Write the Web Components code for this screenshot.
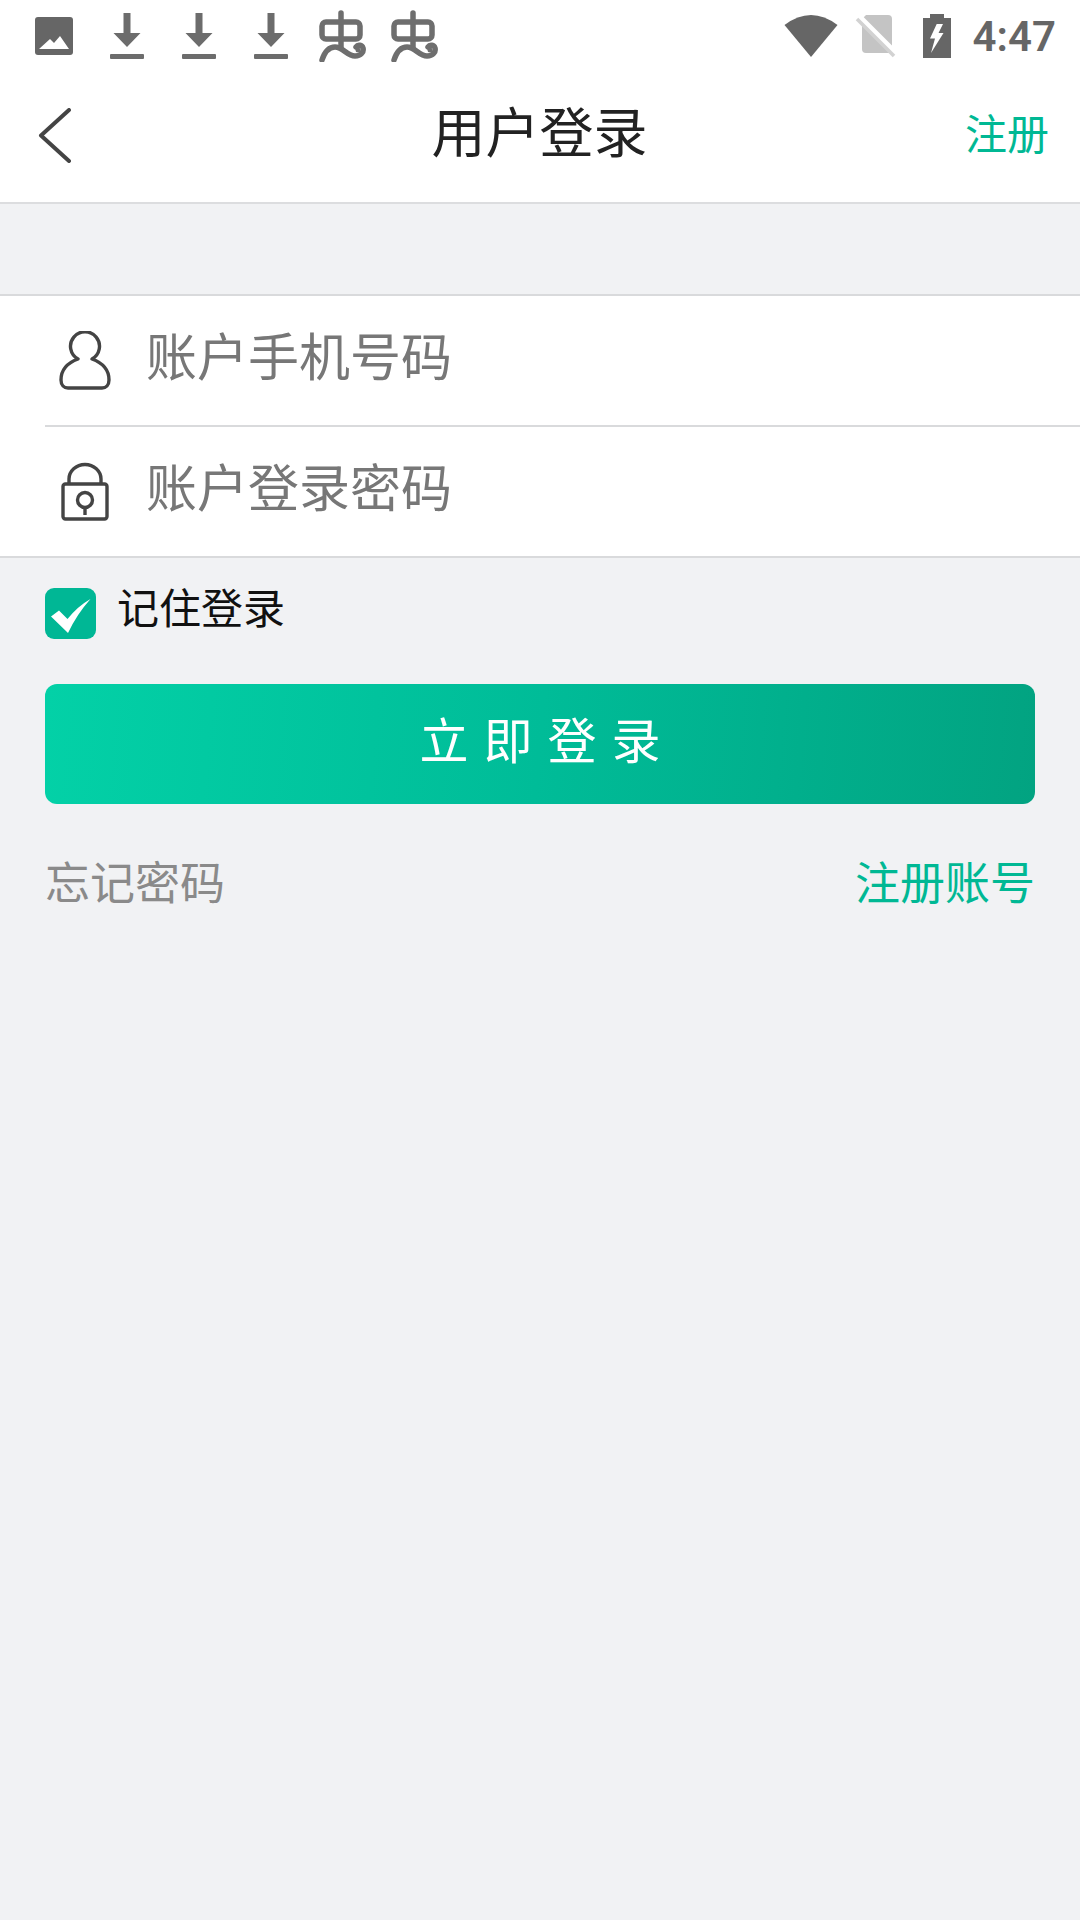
<!DOCTYPE html>
<html lang="zh">
<head>
<meta charset="utf-8">
<title>用户登录</title>
<style>
    html, body { margin: 0; padding: 0; background: #f1f2f4; }
    body {
        width: 1080px;
        height: 1920px;
        overflow: hidden;
        font-family: "Noto Sans CJK SC", "Liberation Sans", sans-serif;
    }
</style>
</head>
<body>
<status-bar></status-bar>
<nav-bar title="用户登录" action="注册"></nav-bar>
<login-panel>
    <login-field kind="user" placeholder="账户手机号码" divider></login-field>
    <login-field kind="lock" placeholder="账户登录密码"></login-field>
</login-panel>
<remember-row>记住登录</remember-row>
<login-button>立即登录</login-button>
<link-row left="忘记密码" right="注册账号"></link-row>

<script>
class StatusBar extends HTMLElement {
    constructor() {
        super();
        this.attachShadow({ mode: 'open' });
        const download = `
            <svg width="36" height="46" viewBox="0 0 36 46">
                <path d="M14.5 0h7v20h10L18 34 4.500 20h10z" fill="#6c6c6c"/>
                <rect x="1" y="41" width="34" height="5" rx="1" fill="#6c6c6c"/>
            </svg>`;
        const bug = `
            <svg class="bug" width="50" height="52" viewBox="0 0 50 52" fill="none" stroke="#6e6e6e" stroke-width="5.500" stroke-linecap="round">
                <path d="M23 3v34"/>
                <rect x="4" y="12" width="38" height="17" rx="4"/>
                <path d="M4 50C7 41 12 37 17 37c8 0 12 9 20 9 6 0 9-4 8-8-1-3-5-4-7-1"/>
                <circle cx="40" cy="40" r="2.500" fill="#6e6e6e" stroke="none"/>
            </svg>`;
        this.shadowRoot.innerHTML = `
            <style>
                :host {
                    display: flex;
                    align-items: center;
                    height: 72px;
                    background: #fff;
                    padding: 0 24px 0 35px;
                    box-sizing: border-box;
                }
                .left, .right { display: flex; align-items: center; }
                .left { gap: 36px; }
                .bug { margin: 0 -7px; }
                .right { margin-left: auto; }
                .time {
                    font: 600 42px Roboto, "Liberation Sans", sans-serif;
                    color: #666;
                    margin-left: 22px;
                }
            </style>
            <div class="left">
                <svg width="38" height="38" viewBox="0 0 38 38">
                    <rect width="38" height="38" rx="3" fill="#666"/>
                    <path d="M4 32 L15 22 L19 26 L25 19 L34 32 Z" fill="#fff"/>
                </svg>
                ${download}${download}${download}${bug}${bug}
            </div>
            <div class="right">
                <svg width="54" height="44" viewBox="0 0 54 44">
                    <path d="M27 43 L0.500 11 Q27 -9 53.500 11 Z" fill="#666"/>
                </svg>
                <svg width="42" height="46" viewBox="0 0 42 46" style="margin-left:17px">
                    <path d="M11 2h22q4 0 4 4v30q0 4-4 4H11q-4 0-4-4V6z" fill="#c4c4c4"/>
                    <path d="M5 4L42 41" stroke="#fff" stroke-width="5"/>
                    <path d="M2 6L39 43" stroke="#d2d2d2" stroke-width="3.500"/>
                </svg>
                <svg width="28" height="44" viewBox="0 0 28 44" style="margin-left:26px">
                    <path d="M7 0h14v4h7v40H0V4h7z" fill="#666"/>
                    <path d="M13.700 10L7 24.500h5L8 39l12.500-20h-5L20 10z" fill="#fff"/>
                </svg>
                <span class="time">4:47</span>
            </div>
        `;
    }
}

class NavBar extends HTMLElement {
    connectedCallback() {
        if (this.shadowRoot) return;
        this.attachShadow({ mode: 'open' });
        this.shadowRoot.innerHTML = `
            <style>
                :host {
                    display: grid;
                    grid-template-columns: 1fr auto 1fr;
                    align-items: center;
                    height: 115px;
                    background: #fff;
                    border-bottom: 2px solid #dcdddf;
                    padding: 0 39px 15px 38px;
                    margin-bottom: 90px;
                }
                svg { display: block; margin-top: 12px; }
                .title { font-size: 54px; color: #222; line-height: 1; }
                .action {
                    justify-self: end;
                    font-size: 42px;
                    color: #00b894;
                    line-height: 1;
                    margin: 4px -8px 0 0;
                }
            </style>
            <svg width="34" height="55" viewBox="0 0 34 55" fill="none" stroke="#444" stroke-width="4" stroke-linecap="round" stroke-linejoin="round">
                <path d="M31 2L3 27.500L31 53"/>
            </svg>
            <div class="title">${this.getAttribute('title')}</div>
            <div class="action">${this.getAttribute('action')}</div>
        `;
    }
}

class LoginPanel extends HTMLElement {
    constructor() {
        super();
        this.attachShadow({ mode: 'open' });
        this.shadowRoot.innerHTML = `
            <style>
                :host {
                    display: block;
                    background: #fff;
                    border-top: 2px solid #d9dadc;
                    border-bottom: 2px solid #d9dadc;
                    padding-left: 45px;
                }
            </style>
            <slot></slot>
        `;
    }
}

class LoginField extends HTMLElement {
    connectedCallback() {
        if (this.shadowRoot) return;
        this.attachShadow({ mode: 'open' });
        const icons = {
            user: `<svg width="56" height="60" viewBox="0 0 56 60" fill="none" stroke="#444" stroke-width="3.400" stroke-linejoin="round">
                <path d="M21 28 C10 32 4 39 4 49 C4 54 7 57 11 57 H45 C49 57 52 54 52 49 C52 39 46 32 35 28 A14.500 14.500 0 1 0 21 28 Z"/>
            </svg>`,
            lock: `<svg width="56" height="60" viewBox="0 0 56 60" fill="none" stroke="#444" stroke-width="3.400" stroke-linejoin="round">
                <rect x="6" y="22" width="44" height="35" rx="2.500"/>
                <path d="M12 21 V17 A16 14.500 0 0 1 44 17 V21"/>
                <circle cx="28" cy="38" r="7.500"/>
                <path d="M28 45.500 V53"/>
            </svg>`,
        };
        this.shadowRoot.innerHTML = `
            <style>
                :host {
                    display: flex;
                    align-items: center;
                    height: 129px;
                }
                :host([divider]) { border-bottom: 2px solid #d9dadc; }
                svg { margin-left: 12px; flex: none; }
                .ph {
                    margin-left: 33px;
                    font-size: 51px;
                    line-height: 1;
                    color: #777;
                    margin-top: -12px;
                }
            </style>
            ${icons[this.getAttribute('kind')]}
            <span class="ph">${this.getAttribute('placeholder')}</span>
        `;
    }
}

class RememberRow extends HTMLElement {
    constructor() {
        super();
        this.attachShadow({ mode: 'open' });
        this.shadowRoot.innerHTML = `
            <style>
                :host {
                    display: flex;
                    align-items: center;
                    padding: 30px 45px 0;
                    font-size: 42px;
                    color: #111;
                    line-height: 52px;
                }
                .box {
                    width: 51px;
                    height: 51px;
                    border-radius: 9px;
                    background: #00b795;
                    margin-right: 21px;
                    flex: none;
                }
                svg { display: block; }
                .label { margin-top: -16px; }
            </style>
            <div class="box">
                <svg width="51" height="51" viewBox="0 0 51 51">
                    <path d="M6 28.500 L14 22.500 L22.500 31 Q33 18 45.500 11 Q32 26 23 45 Z" fill="#fff"/>
                </svg>
            </div>
            <span class="label"><slot></slot></span>
        `;
    }
}

class LoginButton extends HTMLElement {
    constructor() {
        super();
        this.attachShadow({ mode: 'open' });
        this.shadowRoot.innerHTML = `
            <style>
                :host {
                    display: flex;
                    align-items: center;
                    justify-content: center;
                    height: 120px;
                    margin: 45px 45px 0;
                    border-radius: 12px;
                    background: linear-gradient(95deg, #03d1a7 0%, #00bc98 50%, #02a381 100%);
                    color: #fff;
                    font-size: 49px;
                    letter-spacing: 15px;
                    text-indent: 15px;
                }
                span { margin-top: -14px; }
            </style>
            <span><slot></slot></span>
        `;
    }
}

class LinkRow extends HTMLElement {
    connectedCallback() {
        if (this.shadowRoot) return;
        this.attachShadow({ mode: 'open' });
        this.shadowRoot.innerHTML = `
            <style>
                :host {
                    display: flex;
                    justify-content: space-between;
                    padding: 0 45px;
                    margin-top: 47px;
                    font-size: 45px;
                    line-height: 60px;
                }
                .left { color: #8a8a8a; }
                .right { color: #00b894; }
            </style>
            <span class="left">${this.getAttribute('left')}</span>
            <span class="right">${this.getAttribute('right')}</span>
        `;
    }
}

customElements.define('status-bar', StatusBar);
customElements.define('nav-bar', NavBar);
customElements.define('login-panel', LoginPanel);
customElements.define('login-field', LoginField);
customElements.define('remember-row', RememberRow);
customElements.define('login-button', LoginButton);
customElements.define('link-row', LinkRow);
</script>
</body>
</html>
